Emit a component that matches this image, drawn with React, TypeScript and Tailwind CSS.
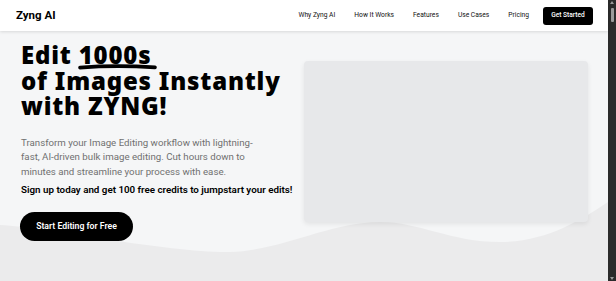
import React from "react";

export default function App() {
  return (
    <div className="flex h-[281px] w-full overflow-hidden font-['Roboto',sans-serif]">
      <div className="flex flex-1 flex-col">
        <nav className="relative z-10 flex h-[31px] shrink-0 items-center justify-between bg-white pl-[16px] pr-[15px] shadow-[0_1px_3px_rgba(0,0,0,0.12)]">
          <div className="text-[11.5px] font-bold text-black">Zyng AI</div>
          <div className="flex items-center text-[6.7px] text-[#111]">
            <span className="mr-[19px]">Why Zyng AI</span>
            <span className="mr-[19px]">How It Works</span>
            <span className="mr-[19px]">Features</span>
            <span className="mr-[19px]">Use Cases</span>
            <span className="mr-[14px]">Pricing</span>
            <span className="flex h-[18px] w-[50px] items-center justify-center rounded-[3px] bg-black text-[6.6px] font-medium text-white">
              Get Started
            </span>
          </div>
        </nav>
        <div className="relative flex-1 overflow-hidden bg-[#f5f6f7]">
          <svg className="absolute inset-0 h-full w-full" viewBox="0 0 608 250" preserveAspectRatio="none">
            <path
              d="M0 194 C 50 197, 170 222, 230 221 C 280 220, 330 191, 380 191 C 420 191, 450 211, 500 211 C 545 211, 580 190, 608 171 L 608 250 L 0 250 Z"
              fill="#ebebec"
            />
          </svg>
          <div className="relative flex pl-[21px]">
            <div className="w-[275px] shrink-0 pt-[11px]">
              <h1 className="whitespace-nowrap font-['Noto_Sans',sans-serif] text-[24px] font-black leading-[25.5px] tracking-[0.8px] text-black">
                Edit{" "}
                <span className="relative inline-block">
                  1000s
                  <svg className="absolute left-[-1px] top-[21px] h-[7px] w-[79px]" viewBox="0 0 79 7" preserveAspectRatio="none">
                    <path d="M2 4.6 Q 38 1.8 77 4.4" stroke="#000" strokeWidth="3.6" fill="none" strokeLinecap="round" />
                  </svg>
                </span>
                <br />
                of Images Instantly
                <br />
                with ZYNG!
              </h1>
              <p className="mt-[17px] whitespace-nowrap text-[9.7px] leading-[14.5px] text-[#707070]">
                Transform your Image Editing workflow with lightning-
                <br />
                fast, AI-driven bulk image editing. Cut hours down to
                <br />
                minutes and streamline your process with ease.
              </p>
              <p className="mt-[4px] whitespace-nowrap text-[9.8px] font-semibold leading-[14px] text-black">
                Sign up today and get 100 free credits to jumpstart your edits!
              </p>
              <div className="ml-[-1px] mt-[15px] flex h-[29px] w-[113px] items-center justify-center rounded-full bg-black text-[8.7px] font-semibold text-white">
                Start Editing for Free
              </div>
            </div>
            <div className="ml-[8px] pt-[30px]">
              <div className="h-[161px] w-[284px] rounded-[4px] bg-[#e7e8ea] shadow-[0_2px_5px_rgba(0,0,0,0.08)]" />
            </div>
          </div>
        </div>
      </div>
      <div className="flex w-[8px] shrink-0 flex-col items-center justify-between bg-[#2b2b2b] py-[1px]">
        <div className="flex w-full flex-col items-center">
          <div className="h-0 w-0 border-x-[2px] border-b-[3px] border-x-transparent border-b-[#9a9a9a]" />
          <div className="mt-[4px] h-[14px] w-[3px] rounded-[1px] bg-[#9a9a9a]" />
        </div>
        <div className="h-0 w-0 border-x-[2px] border-t-[3px] border-x-transparent border-t-[#9a9a9a]" />
      </div>
    </div>
  );
}
